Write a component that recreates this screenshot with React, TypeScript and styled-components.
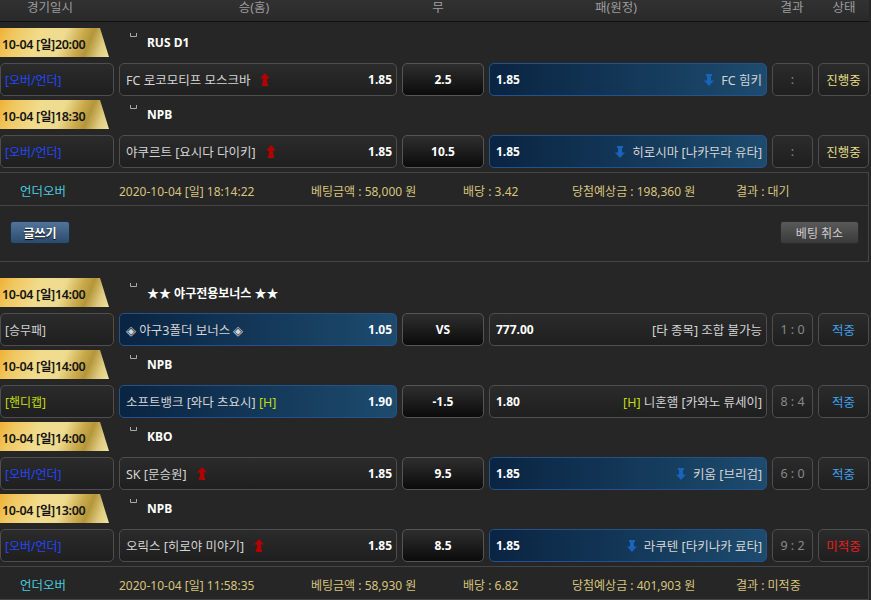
import React from 'react';
import styled, { createGlobalStyle, css } from 'styled-components';

const GlobalStyle = createGlobalStyle`
  html, body { margin: 0; padding: 0; background: #262626; }
  body {
    font-family: "Noto Sans", "Noto Sans CJK KR", sans-serif;
    font-size: 12px;
    color: #d4d4d4;
    overflow: hidden;
  }
  * { box-sizing: border-box; }
`;

const Page = styled.div`
  width: 869px;
`;

const Header = styled.div`
  display: grid;
  grid-template-columns: 100px 308px 60px 296px 56px 48px;
  height: 22px;
  background: linear-gradient(#313131, #2a2a2a);
  border-bottom: 1px solid #111;
`;

const HeadCell = styled.div`
  text-align: center;
  color: #9c9c9c;
  font-size: 12.5px;
  line-height: 16px;
`;

const Group = styled.section`
  padding-top: 6px;
  & + & { margin-top: 10px; }
`;

const Game = styled.div`
  margin-bottom: 4px;
`;

const LeagueRow = styled.div`
  display: flex;
  align-items: center;
  height: 29px;
  margin-bottom: 6px;
`;

const DateBand = styled.div`
  flex: none;
  width: 109px;
  height: 29px;
  display: flex;
  align-items: center;
  padding: 1px 0 0 2px;
  clip-path: polygon(0 0, 100px 0, 109px 100%, 0 100%);
  background: linear-gradient(112deg, #efb236 0%, #f0c862 14%, #f1dc8e 36%, #eedb8e 56%, #caa94c 71%, #b4963a 79%, #dfcb80 90%, #efe39c 100%);
  color: #141414;
  font-size: 12.5px;
  font-weight: 600;
  letter-spacing: -0.3px;
  white-space: nowrap;
`;

const LeagueMark = styled.svg`
  flex: none;
  align-self: flex-start;
  margin: 5px 0 0 21px;
`;

const LeagueName = styled.span`
  margin-left: 10px;
  color: #fff;
  font-weight: 700;
  font-size: 12px;
`;

const BetRow = styled.div`
  display: grid;
  grid-template-columns: 114px 278px 82px 278px 41px 51px;
  column-gap: 5px;
  height: 33px;
`;

type Tone = 'plain' | 'dark' | 'blue';

const Box = styled.div<{ $tone?: Tone }>`
  display: flex;
  align-items: center;
  min-width: 0;
  border-radius: 5px;
  border: 1px solid #4e4e4e;
  background: linear-gradient(#2b2b2b, #1f1f1f);
  white-space: nowrap;
  ${p => p.$tone === 'dark' && css`
    background: linear-gradient(#2e2e2e, #0b0b0b);
    border-color: #555;
  `}
  ${p => p.$tone === 'blue' && css`
    background: linear-gradient(90deg, #0a2442, #1d4b6e);
    border-color: #24528a;
  `}
`;

const TypeBox = styled(Box)<{ $color: string }>`
  padding-left: 4px;
  color: ${p => p.$color};
`;

const PickBox = styled(Box)`
  padding: 0 4px 0 6px;
  justify-content: space-between;
`;

const CenterBox = styled(Box)<{ $color?: string; $bold?: boolean }>`
  justify-content: center;
  color: ${p => p.$color || '#888'};
  font-weight: ${p => (p.$bold ? 700 : 400)};
  font-size: ${p => (p.$bold ? '12px' : '12.5px')};
`;

const Side = styled.span`
  display: flex;
  align-items: center;
`;

const Team = styled.span`
  color: #d4d4d4;
  font-size: 12.5px;
`;

const Handi = styled.span`
  color: #c2dc10;
`;

const Odds = styled.span`
  color: #fff;
  font-weight: 700;
`;

const ArrowUp = styled.svg`
  margin-left: 10px;
  flex: none;
`;

const ArrowDown = styled.svg`
  margin-right: 7px;
  flex: none;
`;

const Footer = styled.div`
  border-top: 1px solid #454545;
  border-right: 1px solid #454545;
`;

const Summary = styled.div`
  display: grid;
  grid-template-columns: 99px 192px 152px 109px 164px 1fr;
  align-items: center;
  height: 33px;
  padding: 3px 0 0 20px;
  border-bottom: 1px solid #454545;
  color: #d6c47e;
  white-space: nowrap;
`;

const Kind = styled.span`
  color: #48cadd;
  font-size: 12.5px;
`;

const Actions = styled.div`
  display: flex;
  justify-content: space-between;
  align-items: flex-start;
  height: 56px;
  padding: 15px 9px 0 10px;
  border-bottom: 1px solid #454545;
`;

const Btn = styled.button<{ $tone: 'blue' | 'grey' }>`
  height: 23px;
  padding: 0;
  border-radius: 3px;
  font-family: inherit;
  font-size: 12px;
  cursor: pointer;
  ${p => p.$tone === 'blue'
    ? css`
      width: 60px;
      color: #fff;
      font-weight: 600;
      background: linear-gradient(#52749a, #2c4a6b);
      border: 1px solid #1b2c40;
      text-shadow: 0 1px 1px #000;
    `
    : css`
      width: 79px;
      color: #cfcfcf;
      background: linear-gradient(#595959, #3a3a3a);
      border: 1px solid #2a2a2a;
    `}
`;

const UpIcon = () => (
  <ArrowUp width="10" height="13" viewBox="0 0 10 13">
    <path d="M5 0 L10 5.5 H7 V10 H8 V13 H2 V10 H3 V5.5 H0 Z" fill="#b40000" />
  </ArrowUp>
);

const DownIcon = () => (
  <ArrowDown width="10" height="12" viewBox="0 0 10 12">
    <path d="M2 0 H8 V2 H7 V6.5 H10 L5 12 L0 6.5 H3 V2 H2 Z" fill="#1a63bd" />
  </ArrowDown>
);

const Mark = () => (
  <LeagueMark width="7" height="4" viewBox="0 0 7 4">
    <path d="M0.5 0 V3.5 H6.5 V0" stroke="#aaa" strokeWidth="1" fill="none" />
  </LeagueMark>
);

type Pick = {
  name: React.ReactNode;
  odds: string;
  arrow?: boolean;
  selected?: boolean;
};

type GameData = {
  date: string;
  league: string;
  type: { label: string; color: string };
  home: Pick;
  draw: string;
  away: Pick;
  score: string;
  status: { label: string; color: string };
};

type Bet = {
  games: GameData[];
  time: string;
  amount: string;
  rate: string;
  win: string;
  result: string;
  showActions?: boolean;
};

const OU = { label: '[오버/언더]', color: '#2246ff' };
const LIVE = { label: '진행중', color: '#e2de86' };
const HIT = { label: '적중', color: '#3ca2f0' };

const bets: Bet[] = [
  {
    games: [
      {
        date: '10-04 [일]20:00', league: 'RUS D1', type: OU,
        home: { name: 'FC 로코모티프 모스크바', odds: '1.85', arrow: true },
        draw: '2.5',
        away: { name: 'FC 힘키', odds: '1.85', arrow: true, selected: true },
        score: ':', status: LIVE,
      },
      {
        date: '10-04 [일]18:30', league: 'NPB', type: OU,
        home: { name: '야쿠르트 [요시다 다이키]', odds: '1.85', arrow: true },
        draw: '10.5',
        away: { name: '히로시마 [나카무라 유타]', odds: '1.85', arrow: true, selected: true },
        score: ':', status: LIVE,
      },
    ],
    time: '2020-10-04 [일] 18:14:22', amount: '58,000', rate: '3.42', win: '198,360', result: '대기',
    showActions: true,
  },
  {
    games: [
      {
        date: '10-04 [일]14:00', league: '★★ 야구전용보너스 ★★', type: { label: '[승무패]', color: '#cfcfcf' },
        home: { name: '◈ 야구3폴더 보너스 ◈', odds: '1.05', selected: true },
        draw: 'VS',
        away: { name: '[타 종목] 조합 불가능', odds: '777.00' },
        score: '1 : 0', status: HIT,
      },
      {
        date: '10-04 [일]14:00', league: 'NPB', type: { label: '[핸디캡]', color: '#c2dc10' },
        home: { name: <>소프트뱅크 [와다 츠요시] <Handi>[H]</Handi></>, odds: '1.90', selected: true },
        draw: '-1.5',
        away: { name: <><Handi>[H]</Handi> 니혼햄 [카와노 류세이]</>, odds: '1.80' },
        score: '8 : 4', status: HIT,
      },
      {
        date: '10-04 [일]14:00', league: 'KBO', type: OU,
        home: { name: 'SK [문승원]', odds: '1.85', arrow: true },
        draw: '9.5',
        away: { name: '키움 [브리검]', odds: '1.85', arrow: true, selected: true },
        score: '6 : 0', status: HIT,
      },
      {
        date: '10-04 [일]13:00', league: 'NPB', type: OU,
        home: { name: '오릭스 [히로야 미야기]', odds: '1.85', arrow: true },
        draw: '8.5',
        away: { name: '라쿠텐 [타키나카 료타]', odds: '1.85', arrow: true, selected: true },
        score: '9 : 2', status: { label: '미적중', color: '#e61e1e' },
      },
    ],
    time: '2020-10-04 [일] 11:58:35', amount: '58,930', rate: '6.82', win: '401,903', result: '미적중',
  },
];

const GameBlock = ({ g }: { g: GameData }) => (
  <Game>
    <LeagueRow>
      <DateBand>{g.date}</DateBand>
      <Mark />
      <LeagueName>{g.league}</LeagueName>
    </LeagueRow>
    <BetRow>
      <TypeBox $color={g.type.color}>{g.type.label}</TypeBox>
      <PickBox $tone={g.home.selected ? 'blue' : 'plain'}>
        <Side>
          <Team>{g.home.name}</Team>
          {g.home.arrow && <UpIcon />}
        </Side>
        <Odds>{g.home.odds}</Odds>
      </PickBox>
      <CenterBox $tone="dark" $color="#fff" $bold>{g.draw}</CenterBox>
      <PickBox $tone={g.away.selected ? 'blue' : 'plain'}>
        <Odds>{g.away.odds}</Odds>
        <Side>
          {g.away.arrow && <DownIcon />}
          <Team>{g.away.name}</Team>
        </Side>
      </PickBox>
      <CenterBox>{g.score}</CenterBox>
      <CenterBox $color={g.status.color}>{g.status.label}</CenterBox>
    </BetRow>
  </Game>
);

export default function App() {
  return (
    <Page>
      <GlobalStyle />
      <Header>
        <HeadCell>경기일시</HeadCell>
        <HeadCell>승(홈)</HeadCell>
        <HeadCell>무</HeadCell>
        <HeadCell>패(원정)</HeadCell>
        <HeadCell>결과</HeadCell>
        <HeadCell>상태</HeadCell>
      </Header>
      {bets.map((b, i) => (
        <Group key={i}>
          {b.games.map((g, j) => (
            <GameBlock key={j} g={g} />
          ))}
          <Footer>
            <Summary>
              <Kind>언더오버</Kind>
              <span>{b.time}</span>
              <span>베팅금액 : {b.amount} 원</span>
              <span>배당 : {b.rate}</span>
              <span>당첨예상금 : {b.win} 원</span>
              <span>결과 : {b.result}</span>
            </Summary>
            {b.showActions && (
              <Actions>
                <Btn $tone="blue">글쓰기</Btn>
                <Btn $tone="grey">베팅 취소</Btn>
              </Actions>
            )}
          </Footer>
        </Group>
      ))}
    </Page>
  );
}
